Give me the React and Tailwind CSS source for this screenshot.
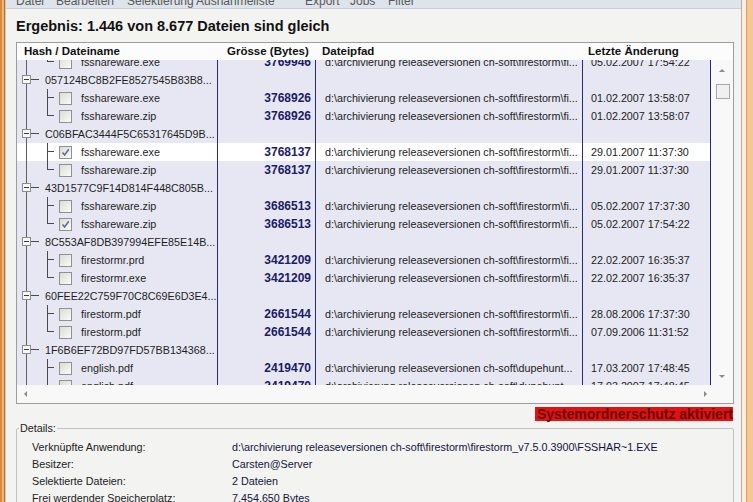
import React from 'react'

const PATH = 'd:\\archivierung releaseversionen ch-soft\\firestorm\\fi...'
const PATH_DH = 'd:\\archivierung releaseversionen ch-soft\\dupehunt...'

const rows = [
  { name: 'fsshareware.exe', size: '3769946', path: PATH, date: '05.02.2007 17:54:22', last: true },
  { hash: '057124BC8B2FE8527545B83B8...' },
  { name: 'fsshareware.exe', size: '3768926', path: PATH, date: '01.02.2007 13:58:07' },
  { name: 'fsshareware.zip', size: '3768926', path: PATH, date: '01.02.2007 13:58:07', last: true },
  { hash: 'C06BFAC3444F5C65317645D9B...' },
  { name: 'fsshareware.exe', size: '3768137', path: PATH, date: '29.01.2007 11:37:30', checked: true, active: true },
  { name: 'fsshareware.zip', size: '3768137', path: PATH, date: '29.01.2007 11:37:30', last: true },
  { hash: '43D1577C9F14D814F448C805B...' },
  { name: 'fsshareware.zip', size: '3686513', path: PATH, date: '05.02.2007 17:37:30' },
  { name: 'fsshareware.zip', size: '3686513', path: PATH, date: '05.02.2007 17:54:22', checked: true, last: true },
  { hash: '8C553AF8DB397994EFE85E14B...' },
  { name: 'firestormr.prd', size: '3421209', path: PATH, date: '22.02.2007 16:35:37' },
  { name: 'firestormr.exe', size: '3421209', path: PATH, date: '22.02.2007 16:35:37', last: true },
  { hash: '60FEE22C759F70C8C69E6D3E4...' },
  { name: 'firestorm.pdf', size: '2661544', path: PATH, date: '28.08.2006 17:37:30' },
  { name: 'firestorm.pdf', size: '2661544', path: PATH, date: '07.09.2006 11:31:52', last: true },
  { hash: '1F6B6EF72BD97FD57BB134368...' },
  { name: 'english.pdf', size: '2419470', path: PATH_DH, date: '17.03.2007 17:48:45' },
  { name: 'english.pdf', size: '2419470', path: PATH_DH, date: '17.03.2007 17:48:45', last: true },
]

const menu = [
  ['Datei', 'w-[40px]'],
  ['Bearbeiten', 'w-[71px]'],
  ['Selektierung', 'w-[69px]'],
  ['Ausnahmeliste', 'w-[109px]'],
  ['Export', 'w-[45px]'],
  ['Jobs', 'w-[38px]'],
  ['Filter', 'w-[40px]'],
]

const details = [
  ['Verknüpfte Anwendung:', 'd:\\archivierung releaseversionen ch-soft\\firestorm\\firestorm_v7.5.0.3900\\FSSHAR~1.EXE'],
  ['Besitzer:', 'Carsten@Server'],
  ['Selektierte Dateien:', '2 Dateien'],
  ['Frei werdender Speicherplatz:', '7.454.650 Bytes'],
]

function Arrow({ dir }) {
  const pts = {
    up: '0,4 3,1 6,4',
    down: '0,1 3,4 6,1',
    left: '4,0 1,3 4,6',
    right: '1,0 4,3 1,6',
  }[dir]
  const vertical = dir === 'up' || dir === 'down'
  return (
    <svg width={vertical ? 7 : 5} height={vertical ? 5 : 7} className="shrink-0">
      <polygon points={pts} fill="#8a8a8a" />
    </svg>
  )
}

function CheckBox({ checked }) {
  return (
    <span className="flex h-[13px] w-[13px] shrink-0 items-center justify-center border border-[#8f9090] bg-gradient-to-br from-[#dcdcd6] to-[#fbfbf8]">
      {checked && (
        <svg width="9" height="9" viewBox="0 0 9 9">
          <path d="M1.5 4.5 L3.6 7 L7.8 1.2" fill="none" stroke="#5b6b98" strokeWidth="1.5" />
        </svg>
      )}
    </span>
  )
}

function GroupLines() {
  return (
    <svg width="28" height="18" className="shrink-0" shapeRendering="crispEdges">
      <line x1="9.5" y1="0" x2="9.5" y2="18" stroke="#5e5e5e" />
      <rect x="5.5" y="4.5" width="8" height="8" fill="#f6f6f6" stroke="#8c8c8c" />
      <line x1="7" y1="8.5" x2="12" y2="8.5" stroke="#3a3a3a" />
      <line x1="14" y1="8.5" x2="22" y2="8.5" stroke="#4a4a4a" />
    </svg>
  )
}

function ChildLines({ last }) {
  return (
    <svg width="40" height="18" className="shrink-0" shapeRendering="crispEdges">
      <line x1="9.5" y1="0" x2="9.5" y2="18" stroke="#5e5e5e" />
      <line x1="30.5" y1="0" x2="30.5" y2={last ? 9 : 18} stroke="#4a4a4a" />
      <line x1="30.5" y1="8.5" x2="37" y2="8.5" stroke="#4a4a4a" />
    </svg>
  )
}

function Row({ row }) {
  const bg = row.active ? 'bg-white' : ''
  const line = 'border-r border-[#2a2a78]'
  if (row.hash) {
    return (
      <div className={`flex h-[18px] ${bg}`}>
        <div className={`flex w-[201px] items-center ${line}`}>
          <GroupLines />
          <span className="whitespace-nowrap text-[#1e1e1e]">{row.hash}</span>
        </div>
        <div className={`w-[98px] ${line}`} />
        <div className={`w-[267px] ${line}`} />
        <div className={`w-[128px] ${line}`} />
      </div>
    )
  }
  return (
    <div className={`flex h-[18px] ${bg}`}>
      <div className={`flex w-[201px] items-center ${line}`}>
        <ChildLines last={row.last} />
        <span className="ml-[2px]">
          <CheckBox checked={row.checked} />
        </span>
        <span className="ml-[9px] whitespace-nowrap text-[#1e1e1e]">{row.name}</span>
      </div>
      <div className={`w-[98px] pr-[4px] text-right text-[12px] font-bold text-[#1b1b66] ${line}`}>{row.size}</div>
      <div className={`w-[267px] overflow-hidden whitespace-nowrap pl-[9px] text-[#222] ${line}`}>{row.path}</div>
      <div className={`w-[128px] whitespace-nowrap pl-[8px] text-[#222] ${line}`}>{row.date}</div>
    </div>
  )
}

export default function App() {
  return (
    <div className="flex h-[502px] w-[753px] overflow-hidden bg-[#f3f3f1] font-['Liberation_Sans',Arial,sans-serif] text-[10.75px] leading-[18px] text-[#1e1e1e]">
      {/* left window frame */}
      <div className="flex w-[6px] shrink-0">
        <div className="w-[2px] bg-[#d98a3e]" />
        <div className="w-[2px] bg-[#f2b673]" />
        <div className="w-[1px] bg-[#b86d35]" />
        <div className="w-[1px] bg-[#cfc8bf]" />
      </div>

      <div className="flex w-[735px] shrink-0 flex-col">
        {/* menu bar */}
        <div className="h-[9px] shrink-0 overflow-hidden border-b border-[#c9ced8] bg-[#dfe3eb]">
          <div className="-mt-[5px] flex pl-[10px] text-[12px] leading-[12px] text-[#585858]">
            {menu.map(([label, w]) => (
              <span key={label} className={`${w} whitespace-nowrap`}>{label}</span>
            ))}
          </div>
        </div>

        <div className="flex h-[33px] shrink-0 items-center pl-[10px] text-[14.5px] font-bold text-[#111]">
          Ergebnis: 1.446 von 8.677 Dateien sind gleich
        </div>

        {/* result list */}
        <div className="ml-[10px] flex w-[718px] shrink-0 flex-col border border-[#9d9d9d] bg-white">
          <div className="flex h-[17px] items-center bg-[#fcfcfc] text-[11.5px] font-bold leading-[17px] text-[#111]">
            <div className="w-[201px] pl-[7px]">Hash / Dateiname</div>
            <div className="w-[98px] pl-[9px] whitespace-nowrap">Grösse (Bytes)</div>
            <div className="w-[267px] pl-[6px]">Dateipfad</div>
            <div className="w-[128px] pl-[5px]">Letzte Änderung</div>
          </div>

          <div className="flex h-[325px]">
            <div className="w-[694px] overflow-hidden bg-[#e7e7f3]">
              <div className="-mt-[7px]">
                {rows.map((row, i) => (
                  <Row key={i} row={row} />
                ))}
              </div>
            </div>
            <div className="flex w-[22px] flex-col bg-[#f8f8f8]">
              <div className="flex h-[20px] items-center justify-center">
                <Arrow dir="up" />
              </div>
              <div className="ml-[5px] mt-[4px] h-[15px] w-[14px] border border-[#a8a8a8] bg-[#f0f0f0]" />
              <div className="mt-auto flex h-[18px] items-center justify-center">
                <Arrow dir="down" />
              </div>
            </div>
          </div>

          <div className="flex h-[18px] items-center bg-[#f8f8f8]">
            <div className="flex w-[694px] items-center justify-between px-[6px]">
              <Arrow dir="left" />
              <span className="mr-[-3px]">
                <Arrow dir="right" />
              </span>
            </div>
            <div className="w-[22px]" />
          </div>
        </div>

        <div className="ml-[10px] mt-[3px] flex w-[718px] shrink-0 justify-end">
          <div className="mr-[1px] h-[14px] w-[198px] bg-[#e01212] text-right text-[14px] font-bold leading-[14px] text-[#6a0808] whitespace-nowrap">
            Systemordnerschutz aktiviert
          </div>
        </div>

        <fieldset className="ml-[10px] w-[718px] rounded-[2px] border border-[#c3c3c0] pb-[20px] pl-[15px]">
          <legend className="-ml-[13px] px-[1px] leading-[14px] text-[#222]">Details:</legend>
          <div className="grid grid-cols-[200px_1fr] pt-[4px] leading-[17px]">
            {details.map(([label, value]) => (
              <React.Fragment key={label}>
                <span className="whitespace-nowrap text-[#222]">{label}</span>
                <span className="whitespace-nowrap text-[#14143a]">{value}</span>
              </React.Fragment>
            ))}
          </div>
        </fieldset>
      </div>

      {/* right window frame */}
      <div className="flex w-[12px] shrink-0">
        <div className="w-[1px] bg-[#b4b0aa]" />
        <div className="w-[4px] bg-[#fbeee0]" />
        <div className="w-[1px] bg-[#e29a5c]" />
        <div className="w-[6px] bg-[#f4c896]" />
      </div>
    </div>
  )
}
